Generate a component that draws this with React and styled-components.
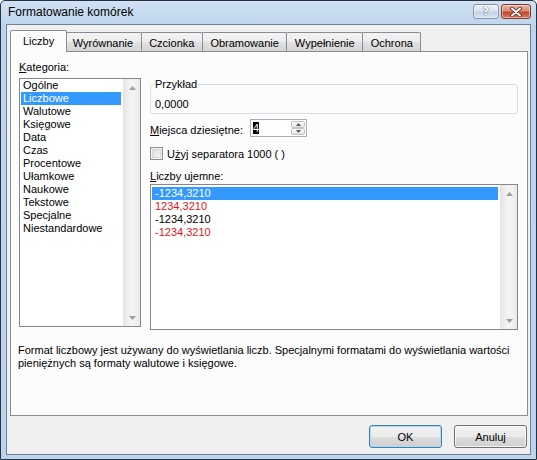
import React from 'react';
import styled, { createGlobalStyle } from 'styled-components';

const GlobalStyle = createGlobalStyle`
  * { box-sizing: border-box; }
  html, body { margin: 0; padding: 0; background: #ffffff; }
  body {
    font-family: "Liberation Sans", Arial, sans-serif;
    font-size: 11px;
    color: #000;
  }
`;

const Window = styled.div`
  width: 537px;
  height: 460px;
  display: flex;
  flex-direction: column;
  padding: 0 5px 4px;
  border: 1px solid #27323f;
  border-radius: 5px 5px 0 0;
  background: linear-gradient(#d0e1f3, #bfd5ed 24px, #bdd4ed);
`;

const TitleBar = styled.div`
  height: 23px;
  flex: none;
  display: flex;
  align-items: flex-start;
  padding-left: 2px;
`;

const Caption = styled.div`
  flex: 1;
  font-size: 12px;
  line-height: 23px;
  color: #000;
`;

const CaptionButton = styled.div`
  width: ${({ $w }) => $w}px;
  height: 15px;
  margin: 3px 0 0 ${({ $gap }) => $gap || 0}px;
  display: flex;
  align-items: center;
  justify-content: center;
  border: 1px solid ${({ $close }) => ($close ? '#7f3a32' : '#8593a6')};
  border-radius: 3px;
  background: ${({ $close }) =>
    $close
      ? 'linear-gradient(#eab0a2, #da8a76 45%, #c5452f 55%, #d97a5c)'
      : 'linear-gradient(#eef3f9, #d9e3ef 45%, #c4d3e4 55%, #d5e1ee)'};
  box-shadow: inset 0 0 0 1px rgba(255, 255, 255, 0.45);
`;

const HelpGlyph = styled.span`
  font-family: "DejaVu Sans", sans-serif;
  font-size: 11px;
  font-weight: bold;
  line-height: 11px;
  color: #fff;
  text-shadow: 0 0 1px #45566b, 0 0 1px #45566b;
`;

const Client = styled.div`
  flex: 1;
  display: flex;
  flex-direction: column;
  background: #f0f0f0;
  border: 1px solid #6f8197;
  padding: 5px 2px 6px 3px;
`;

const TabRow = styled.div`
  height: 22px;
  flex: none;
  display: flex;
  align-items: flex-end;
  margin-bottom: -1px;
  position: relative;
  z-index: 1;
`;

const Tab = styled.div`
  height: ${({ $active }) => ($active ? 22 : 19)}px;
  margin: ${({ $active }) => ($active ? '0 -2px 0 0' : '0 0 1px -1px')};
  padding: ${({ $active }) => ($active ? '0 12px 1px' : '1px 7.5px 0')};
  display: flex;
  align-items: center;
  justify-content: center;
  border: 1px solid #898c95;
  border-bottom: none;
  border-radius: 2px 2px 0 0;
  background: ${({ $active }) =>
    $active ? '#fcfcfc' : 'linear-gradient(#f4f4f4, #ececec 50%, #e1e1e1 50%, #d6d6d6)'};
  position: relative;
  z-index: ${({ $active }) => ($active ? 2 : 1)};
  white-space: nowrap;
`;

const Panel = styled.div`
  flex: 1;
  border: 1px solid #898c95;
  background: #fcfcfc;
  padding: 9px 9px 0 8px;
  display: grid;
  grid-template-columns: 122px 1fr;
  column-gap: 9px;
  row-gap: 14px;
  align-content: start;
  align-items: start;
`;

const Column = styled.div`
  display: flex;
  flex-direction: column;
`;

const Label = styled.div`
  line-height: 13px;
  margin-top: ${({ $mt }) => $mt || 0}px;
  white-space: nowrap;
`;

const Key = styled.u`
  text-decoration: underline;
`;

const ListBox = styled.div`
  height: ${({ $h }) => $h}px;
  margin-top: ${({ $mt }) => $mt || 0}px;
  display: flex;
  border: 1px solid #828790;
  background: #fff;
`;

const ListItems = styled.div`
  flex: 1;
  padding: ${({ $pt }) => $pt || 0}px 2px 0 1px;
`;

const ListItem = styled.div`
  height: 13px;
  line-height: 13px;
  padding-left: ${({ $pl }) => $pl || 2}px;
  white-space: nowrap;
  color: ${({ $selected, $red }) => ($selected ? '#fff' : $red ? '#e3141c' : '#000')};
  background: ${({ $selected }) => ($selected ? '#3399ff' : 'transparent')};
`;

const ScrollTrack = styled.div`
  width: 17px;
  flex: none;
  display: flex;
  flex-direction: column;
  justify-content: space-between;
  background: linear-gradient(to right, #e6e6e6, #f3f3f3 35%, #f3f3f3 65%, #e8e8e8);
  border-left: 1px solid #e4e4e4;
`;

const ScrollArrow = styled.div`
  height: 17px;
  display: flex;
  align-items: center;
  justify-content: center;
`;

const Arrow = ({ down }) => (
  <svg width="7" height="4" viewBox="0 0 7 4">
    <polygon points={down ? '0,0 7,0 3.5,4' : '0,4 7,4 3.5,0'} fill="#a0a0a0" />
  </svg>
);

const Scrollbar = () => (
  <ScrollTrack>
    <ScrollArrow>
      <Arrow />
    </ScrollArrow>
    <ScrollArrow>
      <Arrow down />
    </ScrollArrow>
  </ScrollTrack>
);

const Sample = styled.fieldset`
  margin: 17px 0 0;
  padding: 0 4px 2px 3px;
  border: 1px solid #d5dfe5;
  border-radius: 3px;
  min-width: 0;
`;

const SampleLegend = styled.legend`
  padding: 0 1px;
  line-height: 13px;
`;

const SampleValue = styled.div`
  line-height: 13px;
  margin: 7px 0 0 1px;
`;

const SpinRow = styled.div`
  display: flex;
  align-items: center;
  height: 18px;
  margin-top: 5px;
`;

const SpinLabel = styled.div`
  width: 100px;
  padding-top: 3px;
  white-space: nowrap;
`;

const SpinBox = styled.div`
  width: 57px;
  height: 18px;
  display: flex;
  padding: 1px;
  border: 1px solid #abadb3;
  background: #fff;
`;

const SpinValue = styled.div`
  flex: 1;
  display: flex;
  align-items: center;
  padding-left: 1px;
`;

const Highlight = styled.span`
  background: #000;
  color: #fff;
  line-height: 12px;
`;

const SpinButtons = styled.div`
  width: 14px;
  display: flex;
  flex-direction: column;
`;

const SpinButton = styled.div`
  flex: 1;
  display: flex;
  align-items: center;
  justify-content: center;
  border: 1px solid #c2c2c2;
  border-radius: 2px;
  background: linear-gradient(#f8f8f8, #e8e8e8);
`;

const SpinArrow = ({ down }) => (
  <svg width="5" height="3" viewBox="0 0 5 3">
    <polygon points={down ? '0,0 5,0 2.5,3' : '0,3 5,3 2.5,0'} fill="#5a5a5a" />
  </svg>
);

const CheckRow = styled.div`
  display: flex;
  align-items: center;
  height: 13px;
  margin-top: 10px;
  gap: 4px;
`;

const CheckBox = styled.div`
  width: 13px;
  height: 13px;
  flex: none;
  border: 1px solid #8e8f8f;
  background: linear-gradient(135deg, #d8dbe0, #f7f7f7);
  box-shadow: inset 0 0 0 1px #f4f4f4, inset 0 0 0 2px #d4d6d9;
`;

const Description = styled.div`
  grid-column: 1 / -1;
  line-height: 13px;
  margin-left: -1px;
`;

const ButtonRow = styled.div`
  flex: none;
  display: flex;
  justify-content: flex-end;
  gap: 12px;
  margin: 9px 1px 0 0;
`;

const Button = styled.div`
  width: 73px;
  height: 23px;
  display: flex;
  align-items: center;
  justify-content: center;
  border: 1px solid ${({ $default }) => ($default ? '#3c7fb1' : '#707070')};
  border-radius: 3px;
  background: linear-gradient(#f2f2f2, #ebebeb 50%, #dddddd 50%, #cfcfcf);
  box-shadow: inset 0 0 0 1px ${({ $default }) => ($default ? '#a9def6' : 'rgba(255,255,255,0.75)')};
`;

const categories = [
  'Ogólne',
  'Liczbowe',
  'Walutowe',
  'Księgowe',
  'Data',
  'Czas',
  'Procentowe',
  'Ułamkowe',
  'Naukowe',
  'Tekstowe',
  'Specjalne',
  'Niestandardowe',
];

const negatives = [
  { text: '-1234,3210', selected: true },
  { text: '1234,3210', red: true },
  { text: '-1234,3210' },
  { text: '-1234,3210', red: true },
];

const tabs = ['Liczby', 'Wyrównanie', 'Czcionka', 'Obramowanie', 'Wypełnienie', 'Ochrona'];

const CloseIcon = () => (
  <svg width="12" height="10" viewBox="0 0 12 10">
    <path d="M2 1.5 L10 8.5 M10 1.5 L2 8.5" stroke="#5a1f18" strokeWidth="3.6" strokeLinecap="round" />
    <path d="M2 1.5 L10 8.5 M10 1.5 L2 8.5" stroke="#ffffff" strokeWidth="2" strokeLinecap="round" />
  </svg>
);

const App = () => (
  <>
    <GlobalStyle />
    <Window>
      <TitleBar>
        <Caption>Formatowanie komórek</Caption>
        <CaptionButton $w={26}>
          <HelpGlyph>?</HelpGlyph>
        </CaptionButton>
        <CaptionButton $w={30} $gap={2} $close>
          <CloseIcon />
        </CaptionButton>
      </TitleBar>
      <Client>
        <TabRow>
          {tabs.map((t, i) => (
            <Tab key={t} $active={i === 0}>
              {t}
            </Tab>
          ))}
        </TabRow>
        <Panel>
          <Column>
            <Label>
              <Key>K</Key>ategoria:
            </Label>
            <ListBox $h={249} $mt={4}>
              <ListItems>
                {categories.map((c, i) => (
                  <ListItem key={c} $selected={i === 1}>
                    {c}
                  </ListItem>
                ))}
              </ListItems>
              <Scrollbar />
            </ListBox>
          </Column>
          <Column>
            <Sample>
              <SampleLegend>Przykład</SampleLegend>
              <SampleValue>0,0000</SampleValue>
            </Sample>
            <SpinRow>
              <SpinLabel>
                <Key>M</Key>iejsca dziesiętne:
              </SpinLabel>
              <SpinBox>
                <SpinValue>
                  <Highlight>4</Highlight>
                </SpinValue>
                <SpinButtons>
                  <SpinButton>
                    <SpinArrow />
                  </SpinButton>
                  <SpinButton>
                    <SpinArrow down />
                  </SpinButton>
                </SpinButtons>
              </SpinBox>
            </SpinRow>
            <CheckRow>
              <CheckBox />
              <span>
                U<Key>ż</Key>yj separatora 1000 ( )
              </span>
            </CheckRow>
            <Label $mt={10}>
              <Key>L</Key>iczby ujemne:
            </Label>
            <ListBox $h={146} $mt={1}>
              <ListItems $pt={2}>
                {negatives.map((n, i) => (
                  <ListItem key={i} $selected={n.selected} $red={n.red} $pl={3}>
                    {n.text}
                  </ListItem>
                ))}
              </ListItems>
              <Scrollbar />
            </ListBox>
          </Column>
          <Description>
            Format liczbowy jest używany do wyświetlania liczb. Specjalnymi formatami do wyświetlania wartości
            <br />
            pieniężnych są formaty walutowe i księgowe.
          </Description>
        </Panel>
        <ButtonRow>
          <Button $default>OK</Button>
          <Button>Anuluj</Button>
        </ButtonRow>
      </Client>
    </Window>
  </>
);

export default App;
